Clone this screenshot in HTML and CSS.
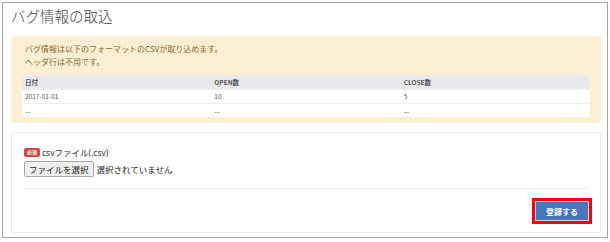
FILE: index.html
```html
<!DOCTYPE html>
<html lang="ja">
  <head>
    <meta charset="UTF-8" />
    <title>バグ情報の取込</title>
    <link rel="stylesheet" href="styles.css">
  </head>
  <body>
    <div class="frame">
      <h1 class="page-title">バグ情報の取込</h1>

      <div class="alert">
        <p>バグ情報は以下のフォーマットのCSVが取り込めます。<br />ヘッダ行は不用です。</p>
        <table class="format-table">
          <thead>
            <tr><th>日付</th><th>OPEN数</th><th>CLOSE数</th></tr>
          </thead>
          <tbody>
            <tr><td>2017-01-01</td><td>10</td><td>5</td></tr>
            <tr><td>...</td><td>...</td><td>...</td></tr>
          </tbody>
        </table>
      </div>

      <form class="panel">
        <div class="field-label">
          <span class="badge">必須</span>csvファイル(.csv)
        </div>
        <div class="file-row">
          <span class="file-btn">ファイルを選択</span>
          <span class="file-name">選択されていません</span>
        </div>
        <hr class="divider" />
        <div class="actions">
          <span class="highlight"><button type="button" class="btn-primary">登録する</button></span>
        </div>
      </form>
    </div>
  </body>
</html>
```

FILE: styles.css
```css
body {
  margin: 0;
  padding: 0;
  font-family: "Noto Sans CJK JP", "Noto Sans", sans-serif;
  background: #ffffff;
  color: #333333;
}
.frame {
  margin: 2px;
  height: 236px;
  box-sizing: border-box;
  border: 1px solid #a4a4a4;
  padding: 0 6px 0 8px;
  display: flex;
  flex-direction: column;
}
.page-title {
  margin: 2px 0 9px 0;
  font-size: 14.5px;
  line-height: 22px;
  font-weight: 300;
  color: #444444;
}
.alert {
  background-color: #fcefd3;
  border-radius: 3px;
  padding: 6px 11px 6px 11px;
  height: 87px;
  box-sizing: border-box;
  color: #8a6a32;
}
.alert p {
  margin: 0 0 7px 3px;
  font-size: 8px;
  line-height: 13px;
}
.format-table {
  width: 100%;
  border-collapse: collapse;
  table-layout: fixed;
  font-size: 6.5px;
  color: #555555;
}
.format-table th,
.format-table td {
  text-align: left;
  height: 14px;
  padding: 0 0 0 3px;
  box-sizing: border-box;
}
.format-table th {
  background-color: #e8eaed;
  font-weight: bold;
}
.format-table td {
  background-color: #ffffff;
  border-top: 1px solid #eeeeee;
}
.panel {
  margin-top: 9px;
  height: 101px;
  box-sizing: border-box;
  border: 1px solid #ececec;
  border-radius: 2px;
  padding: 14px 12px 0 12px;
}
.field-label {
  display: flex;
  align-items: center;
  font-family: "Noto Sans", "Noto Sans CJK JP", sans-serif;
  font-size: 8.5px;
  line-height: 11px;
  color: #333333;
}
.badge {
  background-color: #d9453a;
  color: #ffffff;
  font-size: 5px;
  font-weight: bold;
  border-radius: 2px;
  padding: 0 3px;
  line-height: 9px;
  margin-right: 2px;
}
.file-row {
  margin-top: 3px;
  display: flex;
  align-items: center;
  font-size: 8.5px;
}
.file-btn {
  display: inline-block;
  height: 16px;
  line-height: 14px;
  box-sizing: border-box;
  padding: 0 4px;
  border: 1px solid #a8a8a8;
  border-radius: 2px;
  background-color: #efefef;
  color: #222222;
}
.file-name {
  margin-left: 3px;
  color: #222222;
}
.divider {
  margin: 11px 0 9px 0;
  border: 0;
  border-top: 1px solid #ebebeb;
}
.actions {
  display: flex;
  justify-content: flex-end;
  margin-right: -4px;
}
.highlight {
  display: inline-block;
  border: 3px solid #ff0000;
}
.btn-primary {
  display: block;
  width: 54px;
  height: 20px;
  margin: 0;
  padding: 0;
  border: 1px solid #c9d6ea;
  background-color: #4a76bb;
  color: #ffffff;
  font-family: "Noto Sans CJK JP", sans-serif;
  font-size: 8px;
  font-weight: bold;
}
```
